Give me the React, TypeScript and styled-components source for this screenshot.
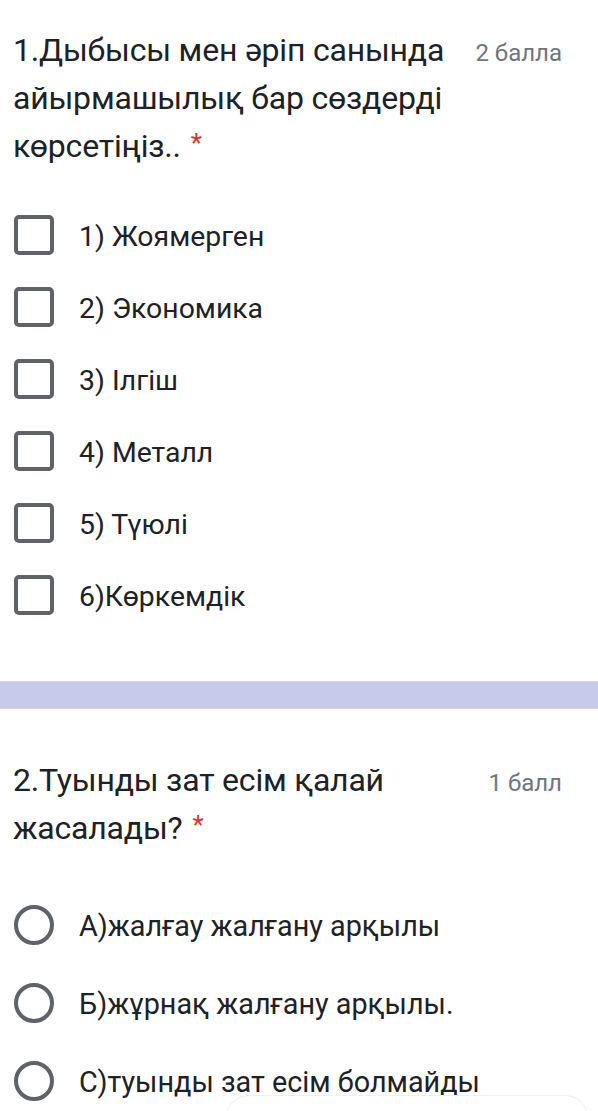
import React from "react";
import styled, { createGlobalStyle } from "styled-components";

const Global = createGlobalStyle`
  html, body { margin: 0; padding: 0; background: #ffffff; }
  body { font-family: Roboto, "Noto Sans", Arial, sans-serif; color: #202124; }
`;

const Page = styled.div`
  position: relative;
  width: 598px;
  height: 1111px;
  overflow: hidden;
  background: #ffffff;
`;

const Section = styled.section<{ $top: number; $bottom: number }>`
  padding: ${(p) => p.$top}px 36px ${(p) => p.$bottom}px 13px;
`;

const Header = styled.div`
  display: flex;
  justify-content: space-between;
  align-items: flex-start;
`;

const Title = styled.div`
  font-size: 32px;
  line-height: 48px;
  color: #202124;
  letter-spacing: -0.2px;
`;

const Star = styled.span`
  color: #d93025;
  font-size: 26px;
  margin-left: 10px;
  position: relative;
  top: -5px;
`;

const Points = styled.div`
  font-size: 24px;
  line-height: 48px;
  padding-top: 3px;
  color: #70757a;
  white-space: nowrap;
`;

const Options = styled.div<{ $gap: number }>`
  margin-top: ${(p) => p.$gap}px;
  display: flex;
  flex-direction: column;
`;

const Row = styled.label<{ $h: number }>`
  display: flex;
  align-items: center;
  height: ${(p) => p.$h}px;
  gap: 25px;
  padding-left: 1px;
`;

const Box = styled.span`
  box-sizing: border-box;
  width: 40px;
  height: 40px;
  border: 4px solid #5f6368;
  border-radius: 5px;
  flex-shrink: 0;
`;

const Circle = styled.span`
  box-sizing: border-box;
  width: 40px;
  height: 40px;
  border: 4px solid #5f6368;
  border-radius: 50%;
  flex-shrink: 0;
`;

const OptionText = styled.span<{ $size: number }>`
  font-size: ${(p) => p.$size}px;
  color: #202124;
  white-space: nowrap;
  padding-top: 2px;
`;

const Band = styled.div`
  height: 26px;
  background: #c6cae8;
  border-top: 1px solid #d2d5e6;
  border-bottom: 1px solid #d2d5e6;
`;

const Sheet = styled.div`
  position: absolute;
  left: 225px;
  top: 1095px;
  width: 362px;
  height: 60px;
  background: #ffffff;
  border: 1px solid #efefef;
  border-radius: 24px;
`;

const q1 = [
  "1) Жоямерген",
  "2) Экономика",
  "3) Ілгіш",
  "4) Металл",
  "5) Түюлі",
  "6)Көркемдік",
];

const q2 = [
  "А)жалғау жалғану арқылы",
  "Б)жұрнақ жалғану арқылы.",
  "С)туынды зат есім болмайды",
];

export default function App() {
  return (
    <Page>
      <Global />
      <Section $top={26} $bottom={50}>
        <Header>
          <Title>
            1.Дыбысы мен әріп санында
            <br />
            айырмашылық бар сөздерді
            <br />
            көрсетіңіз..<Star>*</Star>
          </Title>
          <Points>2 балла</Points>
        </Header>
        <Options $gap={27}>
          {q1.map((t) => (
            <Row key={t} $h={72}>
              <Box />
              <OptionText $size={28.4}>{t}</OptionText>
            </Row>
          ))}
        </Options>
      </Section>
      <Band />
      <Section $top={47} $bottom={0}>
        <Header>
          <Title>
            2.Туынды зат есім қалай
            <br />
            жасалады?<Star>*</Star>
          </Title>
          <Points>1 балл</Points>
        </Header>
        <Options $gap={32}>
          {q2.map((t) => (
            <Row key={t} $h={78}>
              <Circle />
              <OptionText $size={28.8}>{t}</OptionText>
            </Row>
          ))}
        </Options>
      </Section>
      <Sheet />
    </Page>
  );
}
